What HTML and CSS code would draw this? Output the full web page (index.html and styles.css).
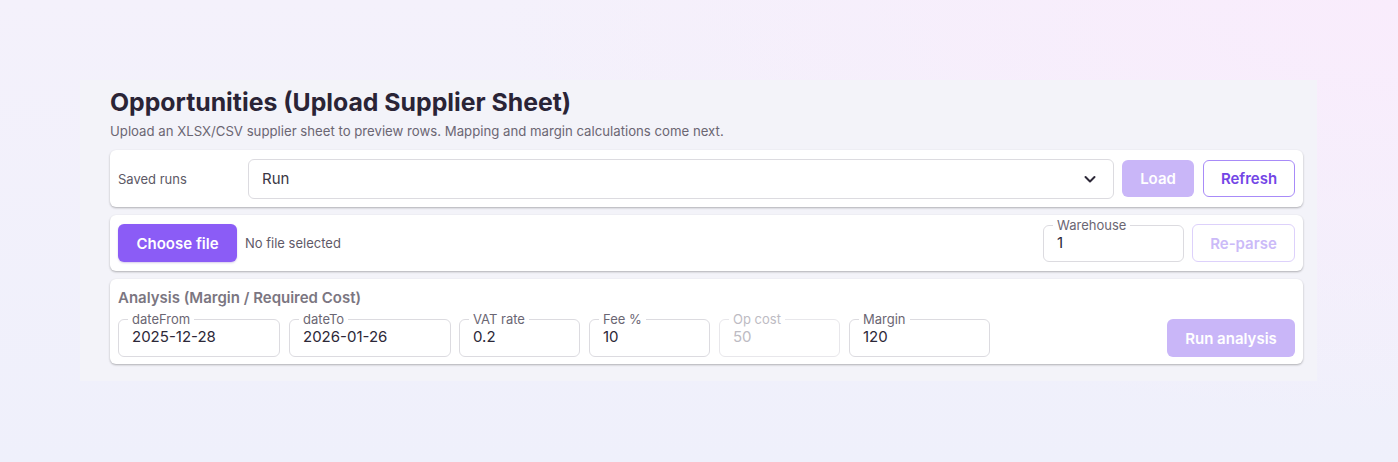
FILE: index.html
```html
<!DOCTYPE html>
<html lang="en">
<head>
<meta charset="utf-8">
<title>Opportunities</title>
<link rel="stylesheet" href="styles.css">
</head>
<body>
<main class="panel">
  <h1 class="title">Opportunities (Upload Supplier Sheet)</h1>
  <p class="subtitle">Upload an XLSX/CSV supplier sheet to preview rows. Mapping and margin calculations come next.</p>

  <section class="card card-runs">
    <span class="runs-label">Saved runs</span>
    <div class="select">
      <span class="select-value">Run</span>
      <svg class="chevron" width="14" height="14" viewBox="0 0 14 14" aria-hidden="true"><path d="M2.5 5 L7 9.5 L11.5 5" fill="none" stroke="#2d2838" stroke-width="2" stroke-linecap="round" stroke-linejoin="round"/></svg>
    </div>
    <button class="btn btn-soft btn-load">Load</button>
    <button class="btn btn-outline">Refresh</button>
  </section>

  <section class="card card-file">
    <button class="btn btn-primary">Choose file</button>
    <span class="file-note">No file selected</span>
    <fieldset class="field field-warehouse">
      <legend>Warehouse</legend>
      <input type="text" value="1">
    </fieldset>
    <button class="btn btn-outline-disabled">Re-parse</button>
  </section>

  <section class="card card-analysis">
    <h2 class="analysis-title">Analysis (Margin / Required Cost)</h2>
    <div class="analysis-row">
      <fieldset class="field field-wide"><legend>dateFrom</legend><input type="text" value="2025-12-28"></fieldset>
      <fieldset class="field field-wide"><legend>dateTo</legend><input type="text" value="2026-01-26"></fieldset>
      <fieldset class="field field-narrow"><legend>VAT rate</legend><input type="text" value="0.2"></fieldset>
      <fieldset class="field field-narrow"><legend>Fee %</legend><input type="text" value="10"></fieldset>
      <fieldset class="field field-narrow field-disabled"><legend>Op cost</legend><input type="text" value="50" disabled></fieldset>
      <fieldset class="field field-mid"><legend>Margin</legend><input type="text" value="120"></fieldset>
      <button class="btn btn-soft btn-run">Run analysis</button>
    </div>
  </section>
</main>
</body>
</html>
```

FILE: styles.css
```css
* { box-sizing: border-box; }

html, body { height: 100%; }

body {
  margin: 0;
  font-family: Inter, "Noto Sans", sans-serif;
  color: #2d2838;
  background:
    radial-gradient(ellipse 900px 420px at 100% 0%, #f9ecfc 0%, rgba(249,236,252,0) 100%),
    linear-gradient(180deg, #f4f1fb 0%, #eff0fb 100%);
  padding: 80px 0 0 80px;
}

.panel {
  width: 1237px;
  height: 301px;
  background: #f3f3f9;
  padding: 6px 14px 0 30px;
}

.title {
  margin: 0;
  font-size: 24.8px;
  line-height: 32px;
  font-weight: 700;
  color: #2a2436;
}

.subtitle {
  margin: 4px 0 10px;
  font-size: 13.2px;
  line-height: 18px;
  color: #6b6673;
}

.card {
  background: #fff;
  border-radius: 6px;
  box-shadow: 0 1px 2px rgba(0,0,0,0.22), 0 1px 3px rgba(0,0,0,0.08);
  margin-bottom: 8px;
  display: flex;
}

.card-runs {
  height: 57px;
  padding: 8px;
  align-items: center;
  gap: 8px;
}

.runs-label {
  width: 122px;
  font-size: 13px;
  color: #5c5866;
}

.select {
  flex: 1;
  height: 40px;
  border: 1px solid #dcdbe0;
  border-radius: 6px;
  display: flex;
  align-items: center;
  justify-content: space-between;
  padding: 0 16px 0 13px;
}

.select-value {
  font-size: 15px;
  color: #3a3542;
}

.chevron { display: block; }

.btn {
  font-family: Inter, "Noto Sans", sans-serif;
  font-size: 15px;
  font-weight: 600;
  height: 37px;
  padding: 0 18px;
  border-radius: 6px;
  border: 1px solid transparent;
  cursor: pointer;
}

.btn-soft {
  background: #c9b6f8;
  color: #fff;
}

.btn-load {
  width: 72px;
  padding: 0;
}

.btn-outline {
  background: #fff;
  border: 1.5px solid #a88bf8;
  color: #7346e6;
  width: 92px;
  padding: 0;
  margin-left: 1px;
}

.btn-primary {
  background: #8b5cf6;
  color: #fff;
  height: 38px;
  width: 119px;
  padding: 0;
  box-shadow: 0 1px 2px rgba(90,50,180,0.25);
}

.btn-outline-disabled {
  background: #fff;
  border: 1.5px solid #ddd1fb;
  color: #cbbaf8;
  height: 38px;
  width: 103px;
  padding: 0;
}

.card-file {
  height: 56px;
  padding: 3px 8px 9px;
  align-items: flex-end;
  gap: 8px;
}

.file-note {
  font-size: 13px;
  color: #5f5a68;
  line-height: 38px;
  margin-right: auto;
}

.field {
  margin: 0;
  height: 44px;
  border: 1px solid #dcdbe0;
  border-radius: 6px;
  padding: 0 12px 5px 13px;
  min-width: 0;
}

.field legend {
  font-size: 13px;
  line-height: 13px;
  padding: 0 4px;
  margin-left: -4px;
  color: #6b6673;
}

.field input {
  display: block;
  width: 100%;
  border: none;
  outline: none;
  background: transparent;
  padding: 0;
  margin: 1px 0 0;
  font-family: Inter, "Noto Sans", sans-serif;
  font-size: 15px;
  line-height: 20px;
  height: 20px;
  color: #2d2838;
}

.field-warehouse { width: 141px; height: 43px; }

.field-disabled { border-color: #e8e7eb; }
.field-disabled legend { color: #bdbbc3; }
.field-disabled input { color: #bdbbc3; }

.card-analysis {
  flex-direction: column;
  padding: 9px 8px 8px;
  height: 85px;
}

.analysis-title {
  margin: 0 0 5px;
  font-size: 15px;
  line-height: 20px;
  font-weight: 600;
  color: #7b7681;
}

.analysis-row {
  display: flex;
  align-items: flex-end;
  gap: 9px;
}

.field-wide { width: 162px; }
.field-wide + .field-narrow { margin-left: -1px; }
.field-narrow { width: 121px; }
.field-mid { width: 141px; }

.btn-run {
  margin-left: auto;
  height: 38px;
  width: 128px;
  padding: 0;
}
```
